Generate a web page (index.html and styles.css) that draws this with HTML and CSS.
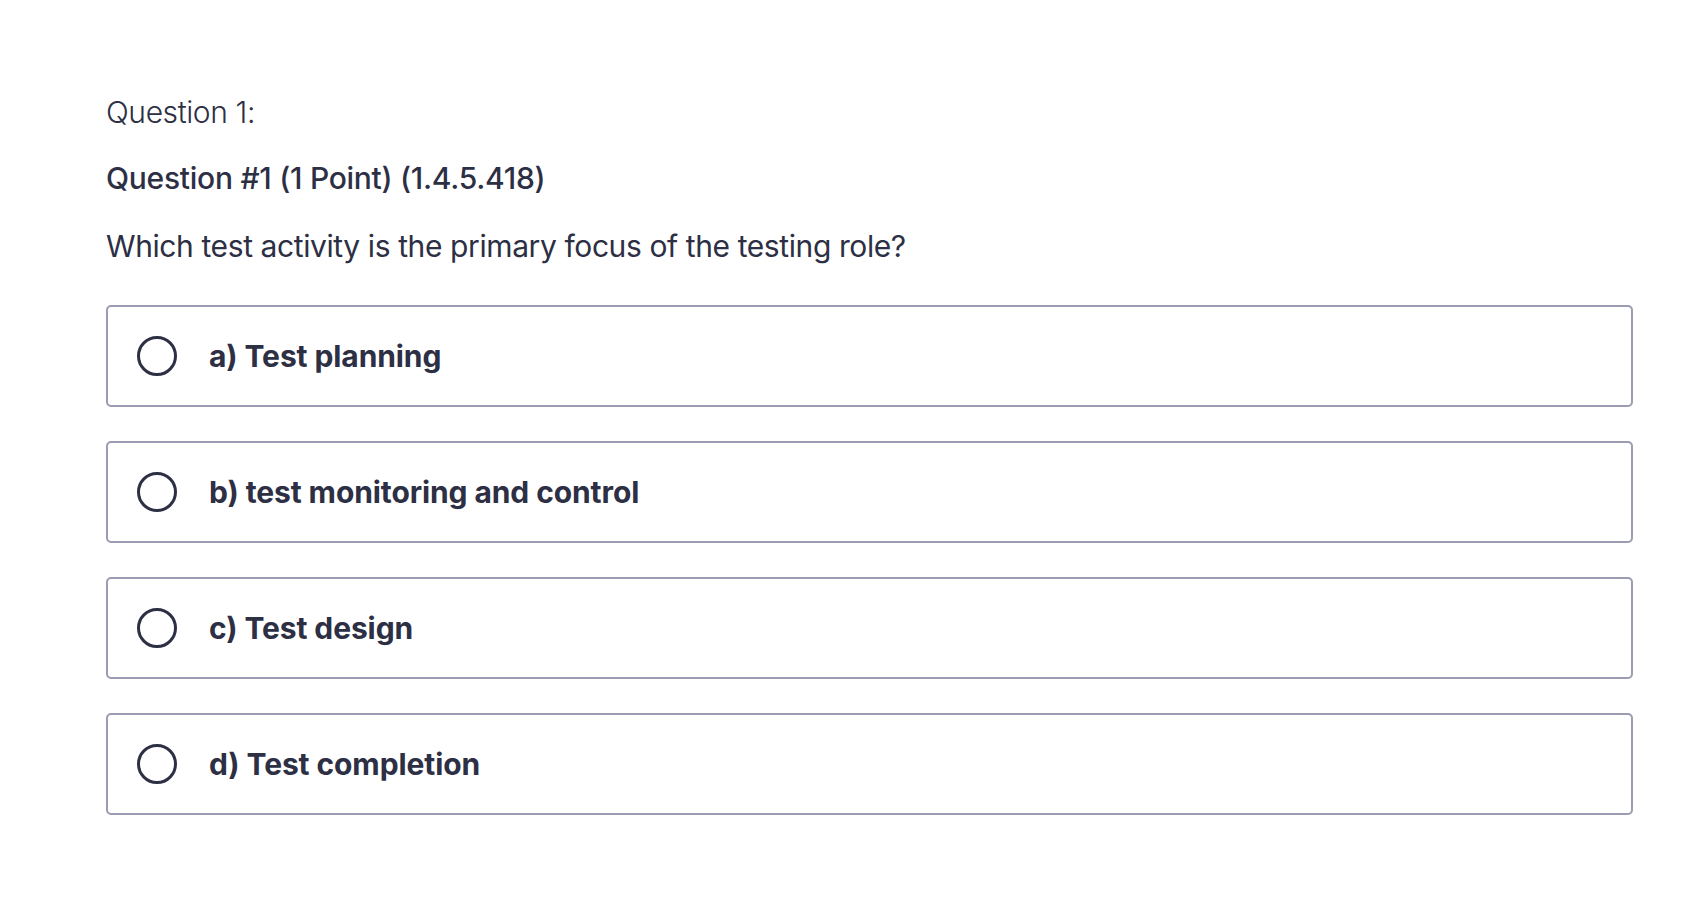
FILE: index.html
```html
<!DOCTYPE html>
<html lang="en">
<head>
<meta charset="utf-8">
<title>Question 1</title>
<link rel="stylesheet" href="styles.css">
</head>
<body>
<main class="quiz">
  <div class="q-label">Question 1:</div>
  <div class="q-title">Question #1 (1 Point) (1.4.5.418)</div>
  <div class="q-prompt">Which test activity is the primary focus of the testing role?</div>
  <ul class="options">
    <li class="option"><span class="radio"></span><span class="opt-text">a) Test planning</span></li>
    <li class="option"><span class="radio"></span><span class="opt-text">b) test monitoring and control</span></li>
    <li class="option"><span class="radio"></span><span class="opt-text">c) Test design</span></li>
    <li class="option"><span class="radio"></span><span class="opt-text">d) Test completion</span></li>
  </ul>
</main>
</body>
</html>
```
FILE: styles.css
```css
html, body {
  margin: 0;
  padding: 0;
  background: #ffffff;
}
body {
  font-family: Inter, "Noto Sans", sans-serif;
  color: #2d2f44;
}
.quiz {
  width: 1527px;
  margin-left: 106px;
  padding-top: 92px;
}
.q-label {
  font-size: 30px;
  line-height: 40px;
  font-weight: 300;
  letter-spacing: -0.4px;
}
.q-title {
  margin-top: 26px;
  font-size: 30px;
  line-height: 40px;
  font-weight: 500;
  letter-spacing: -0.27px;
}
.q-prompt {
  margin-top: 28px;
  font-size: 30px;
  line-height: 40px;
  font-weight: 400;
  letter-spacing: -0.4px;
}
.options {
  list-style: none;
  margin: 39px 0 0;
  padding: 0;
  display: flex;
  flex-direction: column;
  gap: 34px;
}
.option {
  box-sizing: border-box;
  height: 102px;
  border: 2px solid #9b9cb2;
  border-radius: 5px;
  display: flex;
  align-items: center;
  padding-left: 29px;
  gap: 32px;
}
.radio {
  box-sizing: border-box;
  width: 40px;
  height: 40px;
  border: 3px solid #2d2f44;
  border-radius: 50%;
  flex: none;
}
.opt-text {
  font-size: 30px;
  line-height: 40px;
  font-weight: 700;
  letter-spacing: -0.1px;
}
```
